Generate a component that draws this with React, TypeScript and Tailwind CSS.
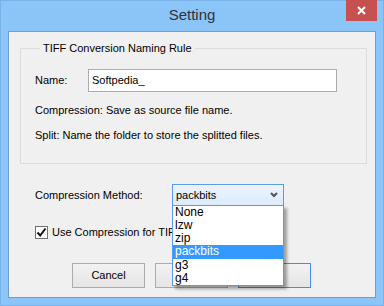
import React from 'react'

const options = ['None', 'lzw', 'zip', 'packbits', 'g3', 'g4']

function Check() {
  return (
    <span className="flex h-[13px] w-[13px] items-center justify-center border border-[#707070] bg-white">
      <svg width="11" height="11" viewBox="0 0 11 11">
        <path d="M1.5 5.5 L4.2 8.5 L9.5 1.5" fill="none" stroke="#111" strokeWidth="2" />
      </svg>
    </span>
  )
}

function Btn({ label, focused }: { label?: string; focused?: boolean }) {
  return (
    <button
      type="button"
      className={`h-[25px] w-[73px] border bg-gradient-to-b from-[#f2f2f2] to-[#e5e5e5] text-[11px] text-black ${
        focused ? 'border-[#3c8ef0]' : 'border-[#acacac]'
      }`}
    >
      {label}
    </button>
  )
}

export default function App() {
  return (
    <div
      className="flex h-[306px] w-[384px] flex-col border border-[#78b2e8] bg-[#8bc5f7] text-[11px] text-black"
      style={{ fontFamily: '"Liberation Sans", Arial, sans-serif' }}
    >
      <div className="relative flex h-[30px] shrink-0 items-center justify-center">
        <span className="mt-[-1px] text-[15px] text-[#333]">Setting</span>
        <div className="absolute right-[6px] top-[-1px] flex h-[21px] w-[31px] items-center justify-center bg-[#c75050]">
          <svg width="9" height="9" viewBox="0 0 9 9">
            <path d="M1 1 L8 8 M8 1 L1 8" stroke="#fff" strokeWidth="2" />
          </svg>
        </div>
      </div>

      <div className="mx-[7px] flex h-[267px] flex-col border border-[#6a9fd4] bg-[#f0f0f0] pl-[11px]">
        <fieldset className="mt-[10px] h-[122px] w-[347px] border border-[#dcdcdc] pl-[14px]">
          <legend className="ml-[5px] px-[3px] leading-[13px]">TIFF Conversion Naming Rule</legend>
          <div className="mt-[14px] flex items-center">
            <span className="w-[53px]">Name:</span>
            <div className="flex h-[23px] w-[249px] items-center border border-[#abadb3] bg-white px-[3px]">
              Softpedia_
            </div>
          </div>
          <p className="mt-[12px] leading-[13px]">Compression: Save as source file name.</p>
          <p className="mt-[12px] leading-[13px]">Split: Name the folder to store the splitted files.</p>
        </fieldset>

        <div className="mt-[20px] flex items-center pl-[15px]">
          <span className="w-[137px]">Compression Method:</span>
          <div className="relative">
            <div className="flex h-[22px] w-[112px] items-center justify-between border border-[#569de5] bg-gradient-to-b from-[#ecf4fc] to-[#dcecfc] pl-[3px] pr-[5px]">
              <span>packbits</span>
              <svg width="8" height="6" viewBox="0 0 8 6">
                <path d="M1 1 L4 4 L7 1" fill="none" stroke="#555" strokeWidth="2" />
              </svg>
            </div>
            <ul className="absolute left-0 top-[21px] z-10 w-[112px] border border-[#569de5] bg-white shadow-[3px_3px_3px_rgba(0,0,0,0.35)]">
              {options.map(o => (
                <li
                  key={o}
                  className={`pl-[2px] text-[12px] leading-[13px] ${
                    o === 'packbits' ? 'h-[14px] bg-[#3399ff] text-white' : 'h-[13px]'
                  }`}
                >
                  {o}
                </li>
              ))}
            </ul>
          </div>
        </div>

        <div className="mt-[18px] flex items-center gap-[4px] pl-[15px]">
          <Check />
          <span>Use Compression for TIFF</span>
        </div>

        <div className="mt-[22px] flex gap-[10px] pl-[52px]">
          <Btn label="Cancel" />
          <Btn />
          <Btn focused />
        </div>
      </div>
    </div>
  )
}
